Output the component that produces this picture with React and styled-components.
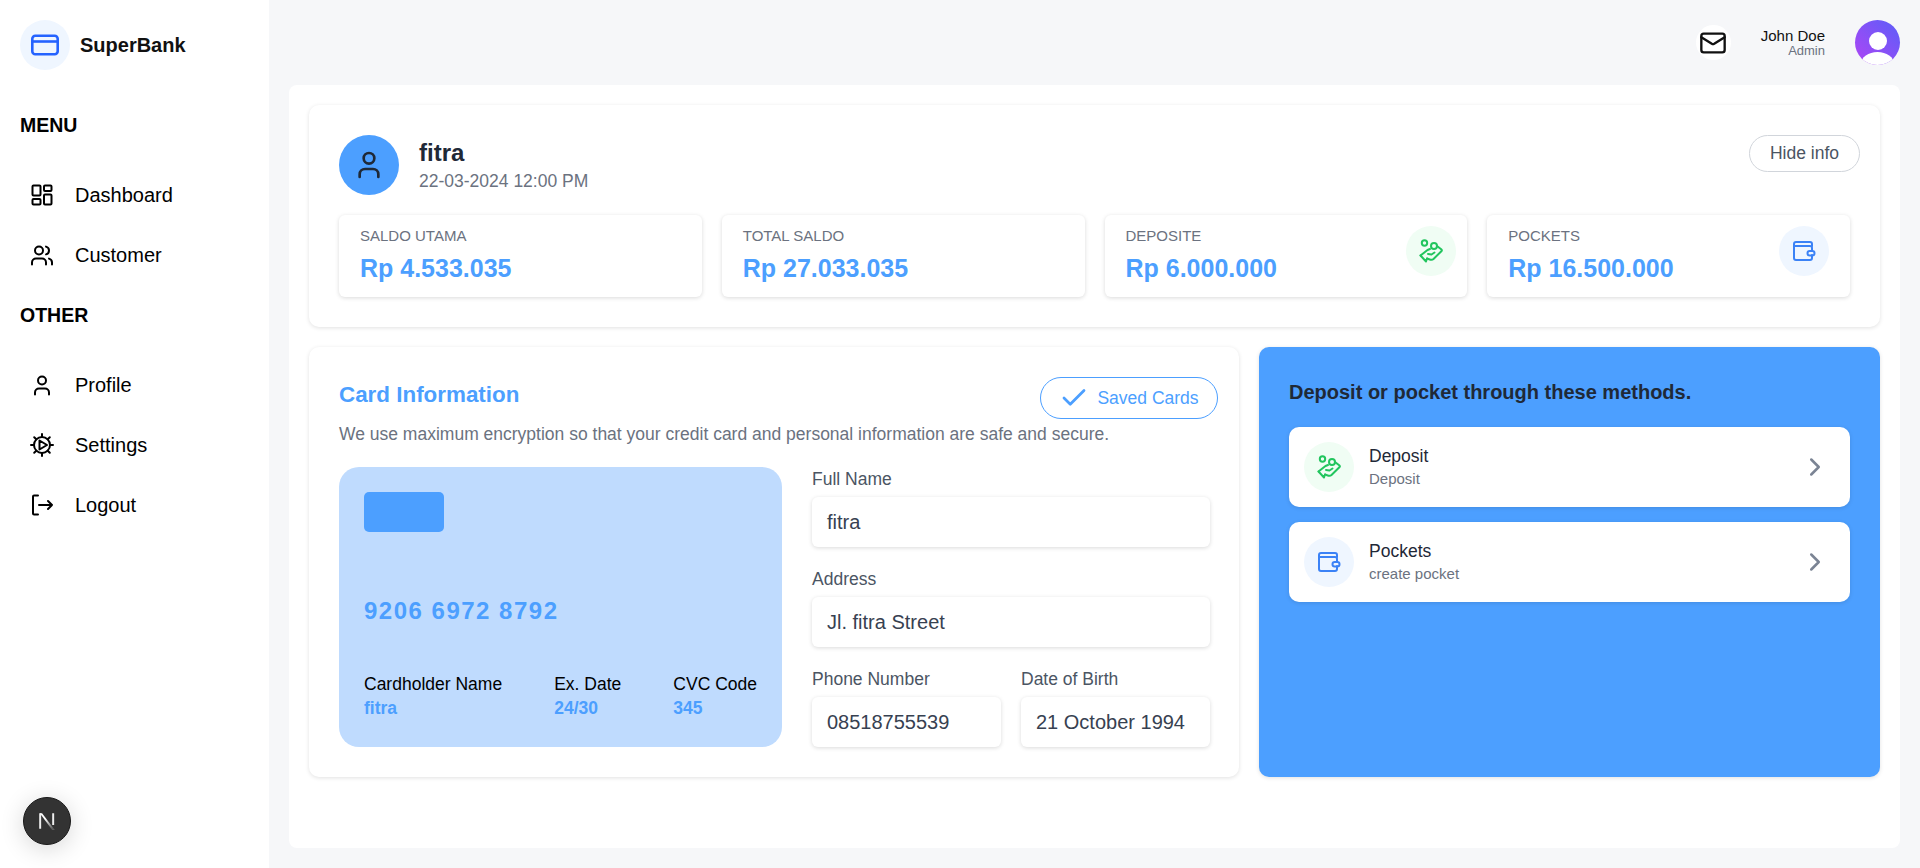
import React from "react";
import styled, { createGlobalStyle } from "styled-components";
import { Users, User, Mail, Check, ChevronRight } from "lucide-react";

const BLUE = "#4c9fff";

const GlobalStyle = createGlobalStyle`
  * { box-sizing: border-box; }
  html, body { margin: 0; padding: 0; height: 100%; }
  body {
    font-family: "Liberation Sans", Arial, sans-serif;
    background: #f6f7f9;
    overflow: hidden;
  }
`;

const DashboardIcon = () => (
  <svg width="24" height="24" viewBox="0 0 24 24" fill="none" stroke="currentColor" strokeWidth="2" strokeLinejoin="round">
    <rect x="2.500" y="2.500" width="8" height="10" rx="1" />
    <rect x="14" y="2.500" width="7.500" height="5.500" rx="1" />
    <rect x="14" y="11.500" width="7.500" height="10" rx="1" />
    <rect x="2.500" y="16" width="8" height="5.500" rx="1" />
  </svg>
);

const GearPlayIcon = () => (
  <svg width="24" height="24" viewBox="0 0 24 24" fill="none" stroke="currentColor" strokeWidth="2" strokeLinecap="round" strokeLinejoin="round">
    <circle cx="12" cy="12" r="8" />
    <path d="M12 1v3M12 20v3M1 12h3M20 12h3M4.200 4.200l2.100 2.100M17.700 17.700l2.100 2.100M4.200 19.800l2.100-2.100M17.700 6.300l2.100-2.100" />
    <path d="M9.500 7.500v9l7.500-4.500z" />
  </svg>
);

const LogoutIcon = () => (
  <svg width="24" height="24" viewBox="0 0 24 24" fill="none" stroke="currentColor" strokeWidth="2" strokeLinecap="round" strokeLinejoin="round">
    <path d="M8 2.500H4a1 1 0 0 0-1 1v17a1 1 0 0 0 1 1h4" />
    <path d="M9 12h13M18 8l4 4-4 4" />
  </svg>
);

const CardIcon = () => (
  <svg width="30" height="30" viewBox="0 0 30 30" fill="none" stroke="#2563ff" strokeWidth="2.600">
    <rect x="2.300" y="5.800" width="25.400" height="18.400" rx="3" />
    <path d="M2 11.500h26" />
  </svg>
);

const WalletIcon = () => (
  <svg width="24" height="24" viewBox="0 0 24 24" fill="none" stroke="#3b82f6" strokeWidth="2" strokeLinecap="round" strokeLinejoin="round">
    <path d="M20 7V5a2 2 0 0 0-2-2H4a2 2 0 0 0-2 2v14a2 2 0 0 0 2 2h14a2 2 0 0 0 2-2v-3" />
    <path d="M2 7h16a2 2 0 0 1 2 2v3" />
    <rect x="15.500" y="12" width="7" height="4.500" rx="2.250" />
  </svg>
);

const HandCoinsIcon = () => (
  <svg width="24" height="24" viewBox="0 0 24 24" fill="none" stroke="#22c55e" strokeWidth="2" strokeLinecap="round" strokeLinejoin="round">
    <circle cx="5.500" cy="4" r="2.700" />
    <circle cx="15" cy="7" r="3" />
    <path d="M1.500 16.500 8.500 11l2.500-1M18 7l4.500 3.500a1 1 0 0 1 .1 1.500L14.500 20a3 3 0 0 1-3 .7L8 19.500" />
    <path d="M1.500 16.500 7 22.500l1-3" />
    <path d="M9 15l3.500.5 3-2" />
  </svg>
);

const Shell = styled.div`
  display: flex;
  height: 868px;
  position: relative;
`;

const Sidebar = styled.aside`
  width: 269px;
  flex: none;
  background: #fff;
  padding: 20px;
  display: flex;
  flex-direction: column;
`;

const Brand = styled.div`
  display: flex;
  align-items: center;
  gap: 10px;
  height: 50px;
  font-size: 20px;
  font-weight: 700;
  color: #111;
`;

const BrandIcon = styled.div`
  width: 50px;
  height: 50px;
  border-radius: 50%;
  background: #eff6ff;
  display: flex;
  align-items: center;
  justify-content: center;
`;

const MenuTitle = styled.h3`
  margin: ${(p) => p.$top}px 0 28px;
  font-size: 19.500px;
  line-height: 24px;
  font-weight: 700;
  color: #000;
`;

const MenuItem = styled.a`
  display: flex;
  align-items: center;
  gap: 21px;
  height: 60px;
  padding-left: 10px;
  font-size: 20px;
  color: #000;
`;

const IconSlot = styled.span`
  width: 24px;
  height: 24px;
  flex: none;
  display: flex;
  align-items: center;
  justify-content: center;
`;

const NextBadge = styled.div`
  position: absolute;
  left: 23px;
  bottom: 23px;
  width: 48px;
  height: 48px;
  border-radius: 50%;
  background: #333;
  border: 1px solid #1a1a1a;
  box-shadow: 0 4px 24px rgba(0, 0, 0, 0.16);
  display: flex;
  align-items: center;
  justify-content: center;
`;

const Main = styled.main`
  flex: 1;
  display: flex;
  flex-direction: column;
  padding: 0 20px 20px;
  min-width: 0;
`;

const TopBar = styled.header`
  height: 85px;
  flex: none;
  display: flex;
  align-items: center;
  justify-content: flex-end;
`;

const MailButton = styled.div`
  width: 35px;
  height: 35px;
  border-radius: 50%;
  background: #fff;
  display: flex;
  align-items: center;
  justify-content: center;
  color: #111;
  margin-right: 30px;
`;

const UserInfo = styled.div`
  text-align: right;
  margin-right: 30px;
`;

const UserName = styled.div`
  font-size: 15px;
  line-height: 16px;
  color: #111;
`;

const UserRole = styled.div`
  font-size: 13px;
  line-height: 14px;
  color: #6b7280;
`;

const TopAvatar = styled.div`
  width: 45px;
  height: 45px;
  border-radius: 50%;
  background: linear-gradient(45deg, #b045f5, #5b5ef8);
  overflow: hidden;
  position: relative;
`;

const AvatarHead = styled.div`
  position: absolute;
  left: 14px;
  top: 12px;
  width: 18px;
  height: 18px;
  border-radius: 50%;
  background: #fff;
`;

const AvatarBody = styled.div`
  position: absolute;
  left: 6px;
  top: 32px;
  width: 33px;
  height: 24px;
  border-radius: 50%;
  background: #fff;
`;

const Panel = styled.div`
  flex: 1;
  background: #fff;
  border-radius: 8px;
  padding: 20px;
  display: flex;
  flex-direction: column;
  gap: 20px;
`;

const Card = styled.section`
  background: #fff;
  border-radius: 10px;
  padding: 30px;
  box-shadow: 0 1px 4px rgba(0, 0, 0, 0.12);
`;

const ProfileCard = styled(Card)`
  height: 222px;
  padding-right: 20px;
`;

const ProfileHead = styled.div`
  display: flex;
  justify-content: space-between;
  height: 60px;
`;

const Identity = styled.div`
  display: flex;
  align-items: center;
  gap: 20px;
`;

const ProfileAvatar = styled.div`
  width: 60px;
  height: 60px;
  border-radius: 50%;
  background: ${BLUE};
  color: #1f2937;
  display: flex;
  align-items: center;
  justify-content: center;
`;

const ProfileName = styled.div`
  font-size: 24px;
  line-height: 32px;
  font-weight: 700;
  color: #1f2937;
`;

const ProfileDate = styled.div`
  font-size: 17.500px;
  line-height: 24px;
  color: #6b7280;
`;

const HideButton = styled.button`
  width: 111px;
  height: 37px;
  border: 1px solid #d1d5db;
  border-radius: 19px;
  background: #fff;
  font: 17.500px "Liberation Sans", Arial, sans-serif;
  color: #4b5563;
`;

const Stats = styled.div`
  display: grid;
  grid-template-columns: repeat(4, 1fr);
  gap: 20px;
  margin-top: 20px;
  margin-right: 10px;
`;

const StatCard = styled.div`
  height: 82px;
  border-radius: 6px;
  padding: 11px ${(p) => (p.$tight ? 11 : 21)}px 11px 21px;
  box-shadow: 0 1px 4px rgba(0, 0, 0, 0.15);
  display: flex;
  justify-content: space-between;
`;

const StatLabel = styled.div`
  margin-top: 1px;
  font-size: 15px;
  line-height: 18px;
  color: #6b7280;
`;

const StatValue = styled.div`
  margin-top: 8px;
  font-size: 25px;
  line-height: 30px;
  font-weight: 700;
  color: ${BLUE};
`;

const IconCircle = styled.div`
  width: 50px;
  height: 50px;
  flex: none;
  border-radius: 50%;
  background: ${(p) => (p.$green ? "#f0fdf4" : "#eff6ff")};
  display: flex;
  align-items: center;
  justify-content: center;
`;

const LowerRow = styled.div`
  display: grid;
  grid-template-columns: 930px 1fr;
  gap: 20px;
  height: 430px;
`;

const InfoCard = styled(Card)`
  padding-right: 21px;
`;

const InfoHead = styled.div`
  display: flex;
  justify-content: space-between;
  align-items: flex-start;
  height: 45px;
`;

const InfoTitle = styled.h2`
  margin: 2px 0 0;
  font-size: 22.400px;
  line-height: 32px;
  font-weight: 700;
  color: ${BLUE};
`;

const SavedButton = styled.button`
  width: 178px;
  height: 42px;
  border: 1px solid ${BLUE};
  border-radius: 21px;
  background: #fff;
  color: ${BLUE};
  font: 17.500px "Liberation Sans", Arial, sans-serif;
  display: flex;
  align-items: center;
  justify-content: center;
  gap: 8px;
`;

const InfoText = styled.p`
  margin: 0;
  font-size: 17.500px;
  line-height: 24px;
  color: #6b7280;
`;

const InfoBody = styled.div`
  display: flex;
  gap: 30px;
  margin-top: 21px;
`;

const CreditCard = styled.div`
  width: 443px;
  height: 280px;
  flex: none;
  background: #bfdbfe;
  border-radius: 20px;
  padding: 25px;
  display: flex;
  flex-direction: column;
`;

const Chip = styled.div`
  width: 80px;
  height: 40px;
  border-radius: 5px;
  background: ${BLUE};
`;

const CardNumber = styled.div`
  margin-top: 65px;
  font-size: 24px;
  line-height: 28px;
  font-weight: 700;
  letter-spacing: 1.500px;
  color: ${BLUE};
`;

const CardMeta = styled.div`
  margin-top: 47px;
  display: flex;
  justify-content: space-between;
`;

const MetaLabel = styled.div`
  font-size: 17.500px;
  line-height: 24px;
  color: #000;
`;

const MetaValue = styled.div`
  margin-top: 1px;
  font-size: 17.500px;
  line-height: 22px;
  font-weight: 700;
  color: ${BLUE};
`;

const Form = styled.div`
  flex: 1;
  max-width: 398px;
  padding-top: 4px;
  display: flex;
  flex-direction: column;
  gap: 24px;
`;

const FormRow = styled.div`
  display: grid;
  grid-template-columns: 1fr 1fr;
  gap: 20px;
`;

const Field = styled.div`
  min-width: 0;
`;

const FieldLabel = styled.div`
  font-size: 17.500px;
  line-height: 24px;
  color: #4b5563;
  margin-top: -4px;
`;

const FieldValue = styled.div`
  height: 50px;
  margin-top: 6px;
  padding: 0 15px;
  border-radius: 6px;
  box-shadow: 0 1px 4px rgba(0, 0, 0, 0.15);
  display: flex;
  align-items: center;
  font-size: 20px;
  color: #374151;
  white-space: nowrap;
`;

const MethodsCard = styled.section`
  background: ${BLUE};
  border-radius: 10px;
  padding: 30px;
  box-shadow: 0 1px 4px rgba(0, 0, 0, 0.12);
`;

const MethodsTitle = styled.h2`
  margin: 0 0 20px;
  font-size: 20px;
  line-height: 30px;
  font-weight: 700;
  color: #1f2937;
`;

const MethodRow = styled.div`
  height: 80px;
  margin-bottom: 15px;
  padding: 0 20px 0 15px;
  background: #fff;
  border-radius: 10px;
  box-shadow: 0 1px 4px rgba(0, 0, 0, 0.12);
  display: flex;
  align-items: center;
  gap: 15px;
  color: #7b8494;
`;

const MethodText = styled.div`
  flex: 1;
`;

const MethodName = styled.div`
  font-size: 17.500px;
  line-height: 24px;
  color: #1f2937;
`;

const MethodSub = styled.div`
  font-size: 15px;
  line-height: 22px;
  color: #6b7280;
`;

const stats = [
  { label: "SALDO UTAMA", value: "Rp 4.533.035" },
  { label: "TOTAL SALDO", value: "Rp 27.033.035" },
  { label: "DEPOSITE", value: "Rp 6.000.000", icon: "hand" },
  { label: "POCKETS", value: "Rp 16.500.000", icon: "wallet" },
];

const meta = [
  { label: "Cardholder Name", value: "fitra" },
  { label: "Ex. Date", value: "24/30" },
  { label: "CVC Code", value: "345" },
];

const StatIcon = ({ kind }) =>
  kind === "hand" ? (
    <IconCircle $green>
      <HandCoinsIcon />
    </IconCircle>
  ) : (
    <IconCircle>
      <WalletIcon />
    </IconCircle>
  );

export default function App() {
  return (
    <>
      <GlobalStyle />
      <Shell>
        <Sidebar>
          <Brand>
            <BrandIcon>
              <CardIcon />
            </BrandIcon>
            SuperBank
          </Brand>
          <MenuTitle $top={43}>MENU</MenuTitle>
          <MenuItem>
            <IconSlot><DashboardIcon /></IconSlot>
            Dashboard
          </MenuItem>
          <MenuItem>
            <IconSlot><Users size={27} strokeWidth={2} /></IconSlot>
            Customer
          </MenuItem>
          <MenuTitle $top={18}>OTHER</MenuTitle>
          <MenuItem>
            <IconSlot><User size={27} strokeWidth={2} /></IconSlot>
            Profile
          </MenuItem>
          <MenuItem>
            <IconSlot><GearPlayIcon /></IconSlot>
            Settings
          </MenuItem>
          <MenuItem>
            <IconSlot><LogoutIcon /></IconSlot>
            Logout
          </MenuItem>
        </Sidebar>

        <Main>
          <TopBar>
            <MailButton>
              <Mail size={28} strokeWidth={2} />
            </MailButton>
            <UserInfo>
              <UserName>John Doe</UserName>
              <UserRole>Admin</UserRole>
            </UserInfo>
            <TopAvatar>
              <AvatarHead />
              <AvatarBody />
            </TopAvatar>
          </TopBar>

          <Panel>
            <ProfileCard>
              <ProfileHead>
                <Identity>
                  <ProfileAvatar>
                    <User size={32} strokeWidth={2} />
                  </ProfileAvatar>
                  <div>
                    <ProfileName>fitra</ProfileName>
                    <ProfileDate>22-03-2024 12:00 PM</ProfileDate>
                  </div>
                </Identity>
                <HideButton>Hide info</HideButton>
              </ProfileHead>
              <Stats>
                {stats.map((s) => (
                  <StatCard key={s.label} $tight={s.icon === "hand"}>
                    <div>
                      <StatLabel>{s.label}</StatLabel>
                      <StatValue>{s.value}</StatValue>
                    </div>
                    {s.icon && <StatIcon kind={s.icon} />}
                  </StatCard>
                ))}
              </Stats>
            </ProfileCard>

            <LowerRow>
              <InfoCard>
                <InfoHead>
                  <InfoTitle>Card Information</InfoTitle>
                  <SavedButton>
                    <Check size={30} strokeWidth={2.2} />
                    Saved Cards
                  </SavedButton>
                </InfoHead>
                <InfoText>
                  We use maximum encryption so that your credit card and personal information are safe and secure.
                </InfoText>
                <InfoBody>
                  <CreditCard>
                    <Chip />
                    <CardNumber>9206 6972 8792</CardNumber>
                    <CardMeta>
                      {meta.map((m) => (
                        <div key={m.label}>
                          <MetaLabel>{m.label}</MetaLabel>
                          <MetaValue>{m.value}</MetaValue>
                        </div>
                      ))}
                    </CardMeta>
                  </CreditCard>
                  <Form>
                    <Field>
                      <FieldLabel>Full Name</FieldLabel>
                      <FieldValue>fitra</FieldValue>
                    </Field>
                    <Field>
                      <FieldLabel>Address</FieldLabel>
                      <FieldValue>Jl. fitra Street</FieldValue>
                    </Field>
                    <FormRow>
                      <Field>
                        <FieldLabel>Phone Number</FieldLabel>
                        <FieldValue>08518755539</FieldValue>
                      </Field>
                      <Field>
                        <FieldLabel>Date of Birth</FieldLabel>
                        <FieldValue>21 October 1994</FieldValue>
                      </Field>
                    </FormRow>
                  </Form>
                </InfoBody>
              </InfoCard>

              <MethodsCard>
                <MethodsTitle>Deposit or pocket through these methods.</MethodsTitle>
                <MethodRow>
                  <IconCircle $green>
                    <HandCoinsIcon />
                  </IconCircle>
                  <MethodText>
                    <MethodName>Deposit</MethodName>
                    <MethodSub>Deposit</MethodSub>
                  </MethodText>
                  <ChevronRight size={30} strokeWidth={2} />
                </MethodRow>
                <MethodRow>
                  <IconCircle>
                    <WalletIcon />
                  </IconCircle>
                  <MethodText>
                    <MethodName>Pockets</MethodName>
                    <MethodSub>create pocket</MethodSub>
                  </MethodText>
                  <ChevronRight size={30} strokeWidth={2} />
                </MethodRow>
              </MethodsCard>
            </LowerRow>
          </Panel>
        </Main>

        <NextBadge>
          <svg width="26" height="26" viewBox="0 0 20 20">
            <defs>
              <linearGradient id="nextFade" x1="0" y1="0" x2="0.7" y2="1">
                <stop offset="0.4" stopColor="#fff" />
                <stop offset="1" stopColor="#fff" stopOpacity="0.2" />
              </linearGradient>
            </defs>
            <path d="M4 4h1.500v12H4zM14 4h1.500v9H14z" fill="#eee" />
            <path d="M4.500 4H6.200L16 17h-2z" fill="url(#nextFade)" />
          </svg>
        </NextBadge>
      </Shell>
    </>
  );
}
